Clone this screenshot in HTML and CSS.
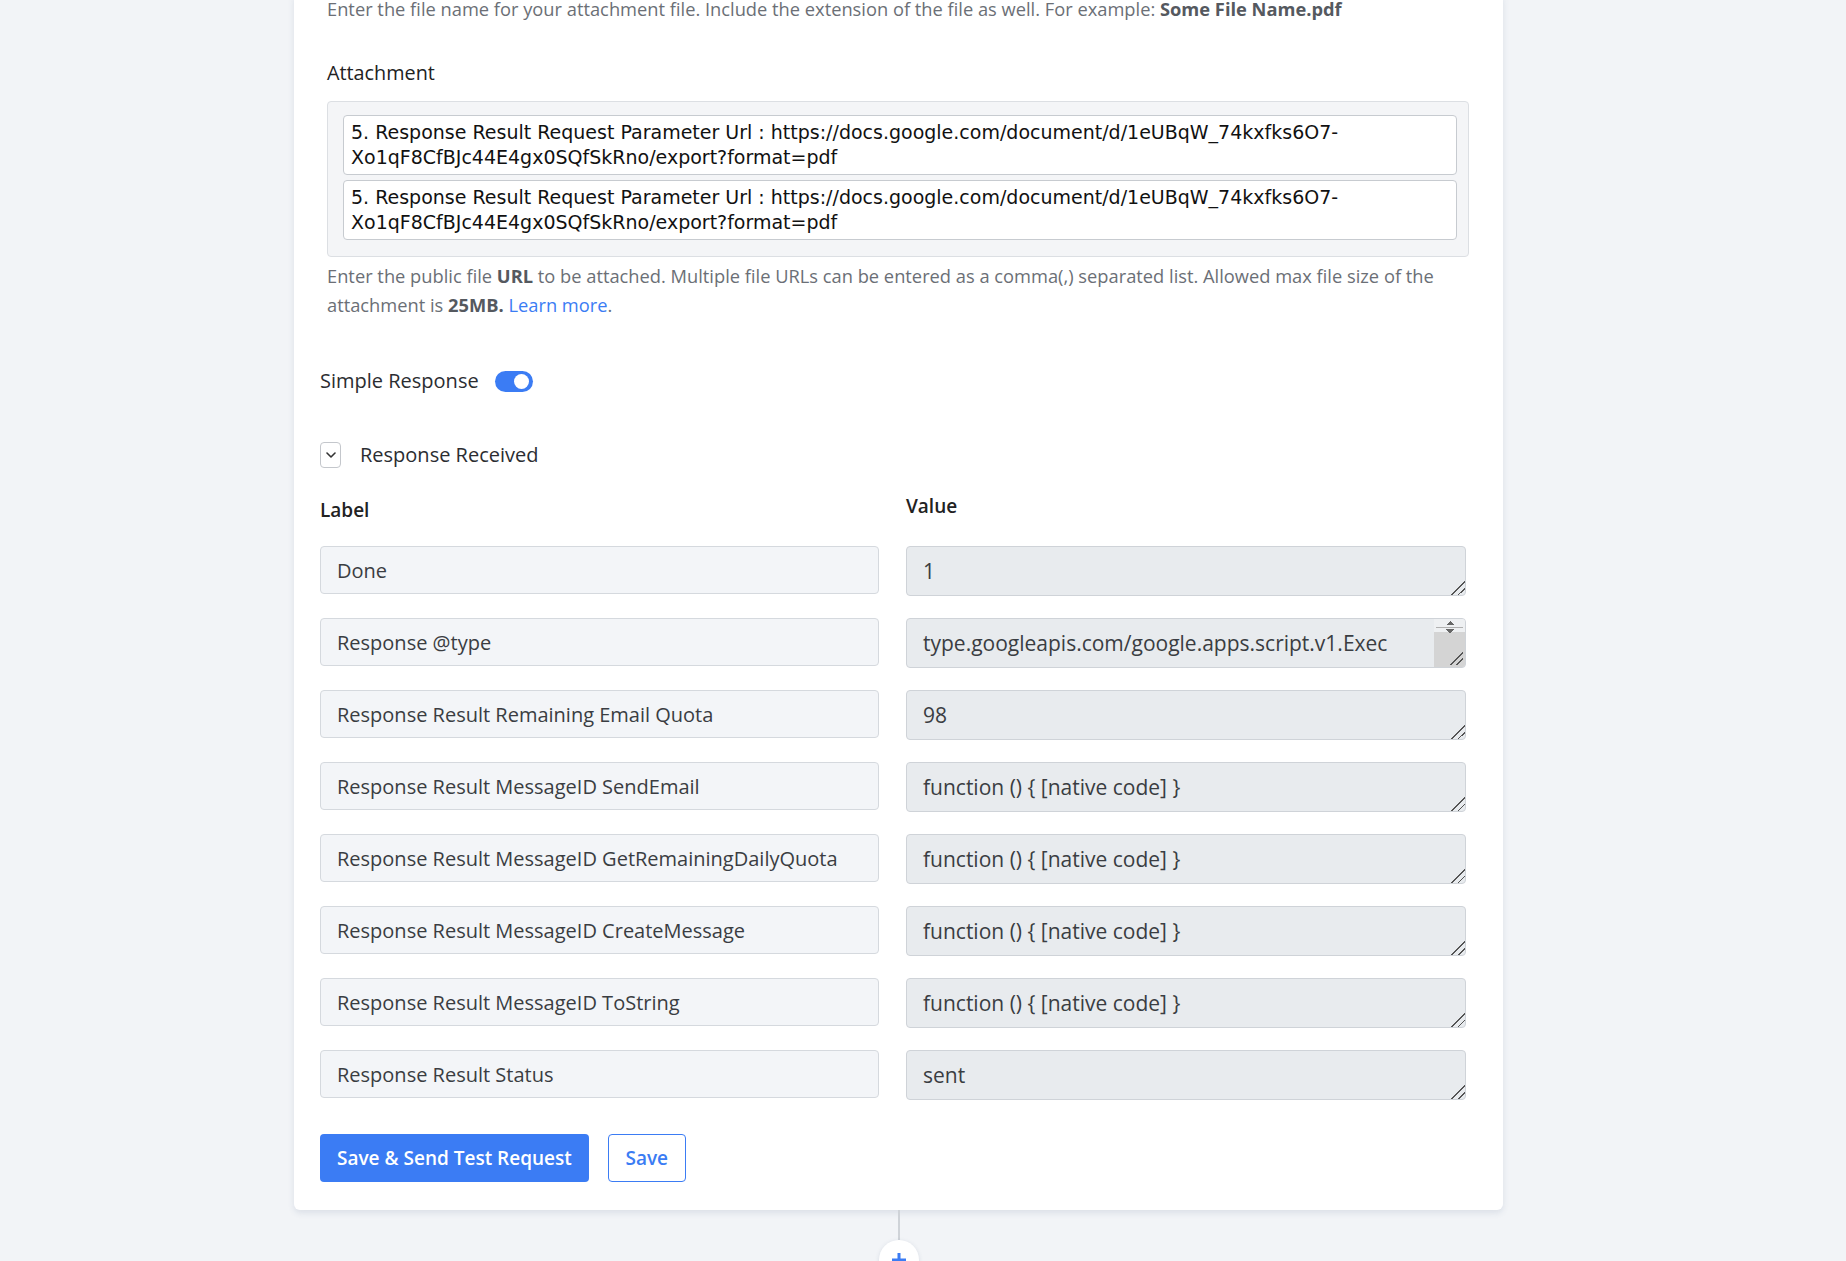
FILE: index.html
```html
<!DOCTYPE html>
<html>
<head>
    <title>Webhook Step</title>
    <link rel="stylesheet" href="styles.css">
</head>
<body>
    <div class="flow">
        <div class="step-card">
            <div class="attach-block">
                <p class="hint hint-top">Enter the file name for your attachment file. Include the extension of the file as well. For example: <b>Some File Name.pdf</b></p>

                <label class="field-label">Attachment</label>
                <div class="attach-box">
                    <div class="attach-item">5. Response Result Request Parameter Url : https://docs.google.com/document/d/1eUBqW_74kxfks6O7-Xo1qF8CfBJc44E4gx0SQfSkRno/export?format=pdf</div>
                    <div class="attach-item">5. Response Result Request Parameter Url : https://docs.google.com/document/d/1eUBqW_74kxfks6O7-Xo1qF8CfBJc44E4gx0SQfSkRno/export?format=pdf</div>
                </div>
                <p class="hint">Enter the public file <b>URL</b> to be attached. Multiple file URLs can be entered as a comma(,) separated list. Allowed max file size of the attachment is <b>25MB.</b> <a href="#">Learn more</a>.</p>
            </div>

            <div class="switch-row">
                <span>Simple Response</span>
                <span class="switch"><span class="knob"></span></span>
            </div>

            <div class="collapse-row">
                <span class="chevron">
                    <svg width="10" height="6" viewBox="0 0 10 6"><path d="M1 1l4 4 4-4" fill="none" stroke="#333" stroke-width="1.6" stroke-linecap="round" stroke-linejoin="round"/></svg>
                </span>
                <span>Response Received</span>
            </div>

            <div class="response-grid">
                <div class="col-head col-head-label">Label</div>
                <div class="col-head">Value</div>

                <input class="label-input" value="Done" readonly>
                <textarea class="value-input" readonly>1</textarea>

                <input class="label-input" value="Response @type" readonly>
                <div class="value-box">
                    <textarea class="value-input value-input-scroll" readonly>type.googleapis.com/google.apps.script.v1.ExecutionResponse</textarea>
                    <span class="scroll-rail"></span>
                </div>

                <input class="label-input" value="Response Result Remaining Email Quota" readonly>
                <textarea class="value-input" readonly>98</textarea>

                <input class="label-input" value="Response Result MessageID SendEmail" readonly>
                <textarea class="value-input" readonly>function () { [native code] }</textarea>

                <input class="label-input" value="Response Result MessageID GetRemainingDailyQuota" readonly>
                <textarea class="value-input" readonly>function () { [native code] }</textarea>

                <input class="label-input" value="Response Result MessageID CreateMessage" readonly>
                <textarea class="value-input" readonly>function () { [native code] }</textarea>

                <input class="label-input" value="Response Result MessageID ToString" readonly>
                <textarea class="value-input" readonly>function () { [native code] }</textarea>

                <input class="label-input" value="Response Result Status" readonly>
                <textarea class="value-input" readonly>sent</textarea>
            </div>

            <div class="actions">
                <button class="btn btn-primary">Save &amp; Send Test Request</button>
                <button class="btn btn-outline">Save</button>
            </div>
        </div>

        <div class="connector"></div>
        <div class="add-step">
            <svg width="16" height="16" viewBox="0 0 16 16"><path d="M8 1v14M1 8h14" stroke="#3b7cf4" stroke-width="3"/></svg>
        </div>
    </div>
</body>
</html>
```

FILE: styles.css
```css
body {
    margin: 0;
    padding: 0;
    background-color: #f2f4f7;
    font-family: "Open Sans", "Noto Sans", sans-serif;
    color: #2b2d31;
    overflow: hidden;
}

.flow {
    width: 1209px;
    margin-left: 294px;
    display: flex;
    flex-direction: column;
    align-items: center;
}

.step-card {
    box-sizing: border-box;
    width: 100%;
    margin-top: -5px;
    padding: 0 37px 28px 26px;
    background-color: white;
    border-radius: 0 0 6px 6px;
    box-shadow: 0 3px 6px rgba(60, 80, 120, 0.12);
}

.attach-block {
    margin-left: 7px;
    margin-right: -3px;
}

.hint {
    margin: 4px 0 0;
    font-size: 18.3px;
    line-height: 29px;
    color: #6b6f76;
}

.hint b {
    color: #55595f;
}

.hint a {
    color: #3b7cf4;
    text-decoration: none;
}

.hint-top {
    margin: 0;
    line-height: 28px;
}

.field-label {
    display: block;
    margin-top: 37px;
    font-size: 19.8px;
    line-height: 26px;
    color: #222;
}

.attach-box {
    margin-top: 15px;
    padding: 13px 11px 16px 15px;
    background-color: #f4f5f7;
    border: 1px solid #dcdfe3;
    border-radius: 4px;
    display: flex;
    flex-direction: column;
    gap: 5px;
}

.attach-item {
    padding: 4px 7px 4px;
    background-color: white;
    border: 1px solid #c7cbd0;
    border-radius: 4px;
    font-family: "DejaVu Sans", sans-serif;
    font-size: 19px;
    line-height: 25px;
    color: #111;
}

.switch-row {
    margin-top: 49px;
    display: flex;
    align-items: center;
    gap: 16px;
    font-size: 20px;
    line-height: 26px;
}

.switch {
    width: 38px;
    height: 21px;
    border-radius: 11px;
    background-color: #3b7cf4;
    position: relative;
}

.knob {
    position: absolute;
    top: 3px;
    right: 4px;
    width: 15px;
    height: 15px;
    border-radius: 50%;
    background-color: white;
}

.collapse-row {
    margin-top: 47px;
    display: flex;
    align-items: center;
    gap: 19px;
    font-size: 20px;
    line-height: 28px;
}

.chevron {
    box-sizing: border-box;
    width: 21px;
    height: 26px;
    border: 1px solid #c4c7cc;
    border-radius: 4px;
    display: flex;
    align-items: center;
    justify-content: center;
}

.response-grid {
    margin-top: 24px;
    display: grid;
    grid-template-columns: 559px 560px;
    column-gap: 27px;
    row-gap: 22px;
    align-items: start;
}

.col-head {
    font-size: 19px;
    font-weight: 600;
    line-height: 26px;
    color: #222;
    margin-bottom: 1px;
}

.col-head-label {
    padding-top: 4px;
}

.label-input,
.value-input {
    box-sizing: border-box;
    width: 100%;
    margin: 0;
    font-family: "Open Sans", "Noto Sans", sans-serif;
    color: #3a3d42;
    border-radius: 4px;
    outline: none;
}

.label-input {
    height: 48px;
    padding: 0 16px;
    font-size: 20px;
    background-color: #f3f5f8;
    border: 1px solid #d5d9de;
}

.value-input {
    display: block;
    height: 50px;
    padding: 11px 22px 11px 16px;
    font-size: 21px;
    line-height: 26px;
    background-color: #e8ebee;
    border: 1px solid #cfd3d8;
}

.value-input::-webkit-resizer {
    background-image: linear-gradient(135deg, transparent 52%, #555 52% 58%, transparent 58% 74%, #555 74% 80%, transparent 80%);
}

/* long value: text wraps under a scrollbar rail */
.value-box {
    position: relative;
}

.value-input-scroll {
    padding: 4px 70px 0 16px;
    line-height: 40px;
    word-break: break-all;
    overflow: hidden;
}

.scroll-rail {
    position: absolute;
    top: 1px;
    right: 1px;
    bottom: 1px;
    width: 31px;
    border-radius: 0 3px 3px 0;
    background-color: #d4d4d4;
    background-image:
        linear-gradient(135deg, transparent 52%, #555 52% 58%, transparent 58% 74%, #555 74% 80%, transparent 80%),
        conic-gradient(from 135deg at 50% 0, #666 90deg, transparent 0),
        linear-gradient(#b0b0b0, #b0b0b0),
        conic-gradient(from -45deg at 50% 100%, #666 90deg, transparent 0),
        linear-gradient(#eef0f2, #eef0f2);
    background-size: 14px 14px, 8px 4px, 27px 1px, 8px 4px, 100% 13px;
    background-position: right 2px bottom 2px, center 2px, center 8px, center 10px, top;
    background-repeat: no-repeat;
}

.actions {
    margin-top: 34px;
    display: flex;
    gap: 19px;
}

.btn {
    height: 48px;
    padding: 0 17px;
    font-family: "Open Sans", "Noto Sans", sans-serif;
    font-size: 19px;
    font-weight: 600;
    border-radius: 4px;
    cursor: pointer;
}

.btn-primary {
    background-color: #3b7cf4;
    color: white;
    border: none;
}

.btn-outline {
    width: 78px;
    padding: 0;
    background-color: white;
    color: #3b7cf4;
    border: 1px solid #3b7cf4;
}

.connector {
    width: 2px;
    height: 30px;
    border-left: 1px solid #cfd3d8;
    border-right: 1px solid #cfd3d8;
    box-sizing: border-box;
}

.add-step {
    width: 40px;
    height: 40px;
    border-radius: 50%;
    background-color: white;
    box-shadow: 0 1px 4px rgba(60, 80, 120, 0.15);
    display: flex;
    align-items: center;
    justify-content: center;
}
```
